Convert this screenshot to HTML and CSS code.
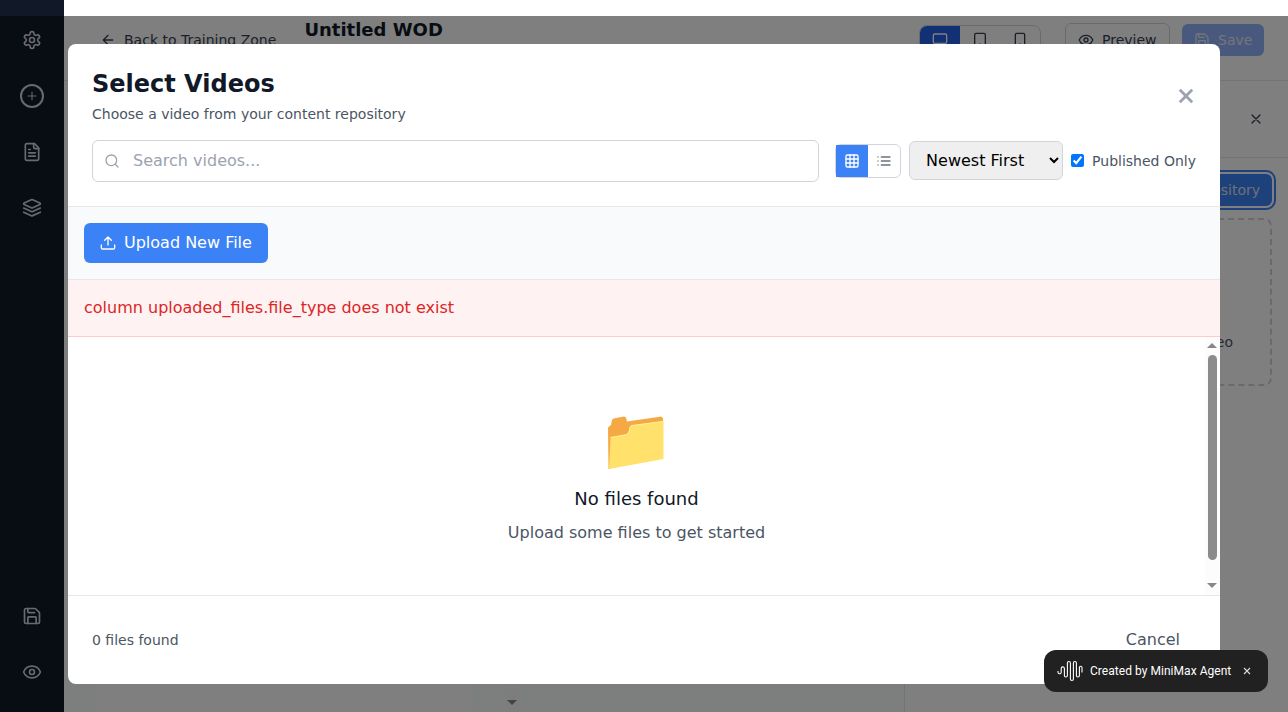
FILE: index.html
```html
<!DOCTYPE html>
<html lang="en">
<head>
<meta charset="utf-8">
<title>Untitled WOD</title>
<link rel="stylesheet" href="styles.css">
</head>
<body>
<svg class="symbols" width="0" height="0">
  <symbol id="save" viewBox="0 0 24 24"><path d="M15.2 3a2 2 0 0 1 1.4.6l3.8 3.8a2 2 0 0 1 .6 1.4V19a2 2 0 0 1-2 2H5a2 2 0 0 1-2-2V5a2 2 0 0 1 2-2z"/><path d="M17 21v-7a1 1 0 0 0-1-1H8a1 1 0 0 0-1 1v7M7 3v4a1 1 0 0 0 1 1h7"/></symbol>
  <symbol id="eye" viewBox="0 0 24 24"><path d="M2.062 12.348a1 1 0 0 1 0-.696 10.75 10.75 0 0 1 19.876 0 1 1 0 0 1 0 .696 10.75 10.75 0 0 1-19.876 0"/><circle cx="12" cy="12" r="3"/></symbol>
  <symbol id="close" viewBox="0 0 24 24"><path d="M18 6 6 18M6 6l12 12"/></symbol>
</svg>
<div class="app">
  <nav class="sidebar">
    <div class="group">
      <svg class="icon i20" viewBox="0 0 24 24"><path d="M12.22 2h-.44a2 2 0 0 0-2 2v.18a2 2 0 0 1-1 1.73l-.43.25a2 2 0 0 1-2 0l-.15-.08a2 2 0 0 0-2.73.73l-.22.38a2 2 0 0 0 .73 2.73l.15.1a2 2 0 0 1 1 1.72v.51a2 2 0 0 1-1 1.74l-.15.09a2 2 0 0 0-.73 2.73l.22.38a2 2 0 0 0 2.73.73l.15-.08a2 2 0 0 1 2 0l.43.25a2 2 0 0 1 1 1.73V20a2 2 0 0 0 2 2h.44a2 2 0 0 0 2-2v-.18a2 2 0 0 1 1-1.73l.43-.25a2 2 0 0 1 2 0l.15.08a2 2 0 0 0 2.73-.73l.22-.39a2 2 0 0 0-.73-2.73l-.15-.08a2 2 0 0 1-1-1.74v-.5a2 2 0 0 1 1-1.74l.15-.09a2 2 0 0 0 .73-2.73l-.22-.38a2 2 0 0 0-2.73-.73l-.15.08a2 2 0 0 1-2 0l-.43-.25a2 2 0 0 1-1-1.73V4a2 2 0 0 0-2-2z"/><circle cx="12" cy="12" r="3"/></svg>
      <span class="add"><svg class="icon" width="12" height="12" viewBox="0 0 24 24"><path d="M4 12h16M12 4v16"/></svg></span>
      <svg class="icon i20" viewBox="0 0 24 24"><path d="M15 2H6a2 2 0 0 0-2 2v16a2 2 0 0 0 2 2h12a2 2 0 0 0 2-2V7Z"/><path d="M14 2v4a2 2 0 0 0 2 2h4M10 9H8M16 13H8M16 17H8"/></svg>
      <svg class="icon i20" viewBox="0 0 24 24"><path d="M12.83 2.18a2 2 0 0 0-1.66 0L2.6 6.08a1 1 0 0 0 0 1.83l8.58 3.91a2 2 0 0 0 1.66 0l8.58-3.9a1 1 0 0 0 0-1.83Z"/><path d="m22 12-9.17 4.16a2 2 0 0 1-1.66 0L2 12M22 17l-9.17 4.16a2 2 0 0 1-1.66 0L2 17"/></svg>
    </div>
    <div class="group">
      <svg class="icon i20"><use href="#save"/></svg>
      <svg class="icon i20"><use href="#eye"/></svg>
    </div>
  </nav>
  <div class="main">
    <header class="topbar">
      <div class="back"><svg class="icon i16" viewBox="0 0 24 24"><path d="m12 19-7-7 7-7M19 12H5"/></svg>Back to Training Zone</div>
      <div class="title">Untitled WOD</div>
      <div class="actions">
        <div class="devices">
          <span class="device active"><svg class="icon i16" viewBox="0 0 24 24"><rect x="2" y="3" width="20" height="14" rx="2"/><path d="M8 21h8M12 17v4"/></svg></span>
          <span class="device"><svg class="icon i16" viewBox="0 0 24 24"><rect x="4" y="2" width="16" height="20" rx="2"/><path d="M12 18h.01"/></svg></span>
          <span class="device"><svg class="icon i16" viewBox="0 0 24 24"><rect x="5" y="2" width="14" height="20" rx="2"/><path d="M12 18h.01"/></svg></span>
        </div>
        <div class="preview"><svg class="icon i16"><use href="#eye"/></svg>Preview</div>
        <div class="save"><svg class="icon i16"><use href="#save"/></svg>Save</div>
      </div>
    </header>
    <div class="workspace">
      <div class="canvas"><div class="sheet"></div><div class="canvas-scroll"><i class="down"></i></div></div>
      <aside class="panel">
        <div class="panel-head"><svg class="icon i16"><use href="#close"/></svg></div>
        <div class="panel-body">
          <div class="repository">Select from Repository</div>
          <div class="drop">Select a Video</div>
        </div>
      </aside>
    </div>
  </div>
</div>

<div class="overlay"></div>
<section class="modal">
  <div class="modal-head">
    <div class="heading">
      <div><h2>Select Videos</h2><p>Choose a video from your content repository</p></div>
      <span class="modal-close"><svg class="icon" width="16" height="16" viewBox="0 0 16 16"><path d="m1.800 1.800 12.400 12.400M14.200 1.800 1.800 14.200"/></svg></span>
    </div>
    <div class="filters">
      <div class="search"><svg class="icon i16" viewBox="0 0 24 24"><circle cx="11" cy="11" r="8"/><path d="m21 21-4.300-4.300"/></svg>Search videos...</div>
      <div class="views">
        <span class="view active"><svg class="icon i16" viewBox="0 0 24 24"><rect x="3" y="3" width="18" height="18" rx="2"/><path d="M3 9h18M3 15h18M9 3v18M15 3v18"/></svg></span>
        <span class="view"><svg class="icon i16" viewBox="0 0 24 24"><path d="M8 6h13M8 12h13M8 18h13M3 6h.01M3 12h.01M3 18h.01"/></svg></span>
      </div>
      <select class="sort"><option>Newest First</option></select>
      <label class="published"><input type="checkbox" checked>Published Only</label>
    </div>
  </div>
  <div class="toolbar">
    <div class="upload"><svg class="icon i16" viewBox="0 0 24 24"><path d="M12 15V3M7 8l5-5 5 5M2 15v4a2 2 0 0 0 2 2h16a2 2 0 0 0 2-2v-4"/></svg>Upload New File</div>
  </div>
  <div class="error">column uploaded_files.file_type does not exist</div>
  <div class="content">
    <div class="empty">
      <svg class="folder" width="58" height="54" viewBox="0 0 58 54">
        <path fill="#f4a945" d="M1 11.500 4 9l1-5 1.500-1.500L17 .5l2 1 1 4L54.500.5l1.500 2V6L3 53H1.500z"/>
        <path fill="#ffe16b" d="M2 53 3.500 21.500 20 18.500l2-2 1-5 2-2L56.500 5v38z"/>
        <path fill="none" stroke="#fff09a" stroke-width="1.200" d="M3.500 21.500 20 18.500l2-2 1-5 2-2L56.500 5.500"/>
      </svg>
      <h3>No files found</h3>
      <p>Upload some files to get started</p>
    </div>
    <div class="scroll"><i class="up"></i><i class="thumb"></i><i class="down"></i></div>
  </div>
  <div class="modal-foot"><span class="count">0 files found</span><span class="cancel">Cancel</span></div>
</section>

<div class="badge">
  <svg class="wave" width="26" height="22" viewBox="0 0 26 22"><path d="M1 11v1.200a1.600 1.600 0 0 0 3.200 0V8.500a1.600 1.600 0 0 1 3.200 0v7a1.500 1.500 0 0 0 3 0V3a1.500 1.500 0 0 1 3 0v16a1.500 1.500 0 0 0 3 0V3a1.500 1.500 0 0 1 3 0v12.500a1.500 1.500 0 0 0 3 0v-8a1.300 1.300 0 0 1 2.600 0v5"/></svg>
  <span>Created by MiniMax Agent</span>
  <svg class="badge-close" width="8" height="8" viewBox="0 0 8 8"><path d="m1 1 6 6M7 1 1 7"/></svg>
</div>
</body>
</html>
```

FILE: styles.css
```css
* { box-sizing: border-box; }
body { margin: 0; height: 712px; overflow: hidden; position: relative; background: #fff; color: #111827; font: 16px/24px "DejaVu Sans", sans-serif; }
h2, h3, p { margin: 0; }
.symbols { position: absolute; }
.icon { fill: none; stroke: currentColor; stroke-width: 2; stroke-linecap: round; stroke-linejoin: round; flex: none; display: block; }
.i16 { width: 16px; height: 16px; }
.i20 { width: 20px; height: 20px; }

.app { display: flex; height: 712px; }
.sidebar { width: 64px; background: #111827; color: #d1d5db; display: flex; flex-direction: column; justify-content: space-between; padding: 30px 0; }
.group { display: flex; flex-direction: column; align-items: center; gap: 36px; }
.add { width: 24px; height: 24px; margin: -2px 0; border: 2px solid; border-radius: 50%; display: grid; place-items: center; }
.main { flex: 1; display: flex; flex-direction: column; min-width: 0; }
.topbar { height: 81px; border-bottom: 1px solid #e5e7eb; display: flex; align-items: center; padding: 0 24px 0 36px; color: #374151; }
.back { display: flex; align-items: center; gap: 8px; font-size: 14px; width: 204.4px; white-space: nowrap; }
.title { font-size: 18px; line-height: 28px; font-weight: bold; color: #111827; margin-bottom: 21px; }
.actions { margin-left: auto; display: flex; align-items: center; gap: 12px; font-size: 14px; }
.devices { display: flex; border: 1px solid #d1d5db; border-radius: 8px; overflow: hidden; margin-right: 12px; height: 30px; width: 122px; }
.device { flex: 1; display: grid; place-items: center; }
.device.active { background: #2563eb; color: #fff; }
.preview, .save { display: flex; align-items: center; gap: 8px; border-radius: 6px; }
.preview { border: 1px solid #d1d5db; width: 105px; height: 34px; padding-left: 12px; }
.save { background: #93b3fa; color: #e5eaf5; width: 82px; height: 32px; padding-left: 12px; }
.workspace { flex: 1; display: flex; }
.canvas { flex: 1; background: #f8fefb; display: flex; padding-left: 32px; }
.sheet { width: 376px; background: #fff; border-radius: 0 0 8px 8px; }
.canvas-scroll { width: 15px; margin-left: 33px; background: #fafafa; display: flex; flex-direction: column; justify-content: flex-end; align-items: flex-start; padding: 0 0 7px 2px; }
.panel { width: 384px; border-left: 1px solid #e5e7eb; background: #fff; }
.panel-head { height: 77px; border-bottom: 1px solid #e5e7eb; display: flex; justify-content: flex-end; align-items: center; padding-right: 24px; color: #374151; }
.panel-body { padding: 16px; font-size: 14px; }
.repository { height: 32px; margin-bottom: 12px; background: #3b82f6; color: #dbe1ec; border-radius: 6px; display: flex; align-items: center; justify-content: flex-end; padding-right: 12px; box-shadow: 0 0 0 2px #fff, 0 0 0 4px #3b82f6; }
.drop { height: 168px; border: 2px dashed #d1d5db; border-radius: 8px; display: flex; align-items: flex-end; justify-content: flex-end; padding: 0 37px 30px 0; color: #4b5563; }

.overlay { position: absolute; inset: 16px 0 0; background: rgba(0, 0, 0, .5); }
.modal { position: absolute; left: 68px; top: 44px; width: 1152px; height: 640px; background: #fff; border-radius: 8px; overflow: hidden; display: flex; flex-direction: column; }
.modal-head { padding: 24px; border-bottom: 1px solid #e5e7eb; }
.heading { display: flex; justify-content: space-between; align-items: center; margin-bottom: 16px; }
.heading h2 { font-size: 24px; line-height: 32px; }
.heading p { font-size: 14px; line-height: 20px; margin-top: 4px; color: #4b5563; }
.modal-close { color: #9ca3af; padding-right: 2px; }
.modal-close .icon { stroke-width: 2.8; stroke-linecap: butt; }
.filters { height: 42px; display: flex; align-items: center; gap: 8px; }
.search { flex: 1; height: 42px; margin-right: 8px; border: 1px solid #d1d5db; border-radius: 6px; display: flex; align-items: center; gap: 13px; padding: 0 11px; color: #9ca3af; }
.views { width: 66px; height: 34px; border: 1px solid #d1d5db; border-radius: 6px; display: flex; color: #6b7280; }
.view { flex: 1; display: grid; place-items: center; }
.view.active { background: #3b82f6; color: #fff; }
.sort { width: 154px; height: 39px; margin-bottom: 2px; padding: 8px 12px; border: 1px solid #d1d5db; border-radius: 6px; background: #efefef; color: #000; font: 16px "DejaVu Sans", sans-serif; }
.published { display: flex; align-items: center; font-size: 14px; color: #4b5563; white-space: nowrap; }
.published input { width: 13px; height: 13px; margin: 0 8px 1px 0; }
.toolbar { background: #f9fafb; padding: 16px; border-bottom: 1px solid #e5e7eb; }
.upload { width: 184px; height: 40px; background: #3b82f6; color: #fff; border-radius: 6px; display: flex; align-items: center; gap: 8px; padding: 0 16px; white-space: nowrap; }
.error { padding: 16px; background: #fef2f2; color: #dc2626; border-bottom: 1px solid #fecaca; }
.content { flex: 1; display: flex; min-height: 0; }
.empty { flex: 1; display: flex; flex-direction: column; align-items: center; padding-top: 79px; }
.folder { display: block; margin-right: 1px; }
.empty h3 { font-size: 18px; line-height: 28px; font-weight: normal; margin: 15px 0 8px; }
.empty p { color: #4b5563; }
.scroll { width: 15px; background: #fcfcfc; display: flex; flex-direction: column; align-items: flex-start; padding: 6px 0 7px 2px; }
.up, .down { width: 0; height: 0; border: 5px solid transparent; }
.up { border-top: 0; border-bottom-color: #878787; }
.down { border-bottom: 0; border-top-color: #878787; }
.thumb { width: 9px; height: 205px; border-radius: 5px; background: #8b8b8b; margin: 7px 0 auto 1px; }
.modal-foot { height: 89px; border-top: 1px solid #e5e7eb; padding: 0 40px 0 24px; display: flex; align-items: center; justify-content: space-between; color: #4b5563; }
.count { font-size: 14px; }
.badge { position: absolute; left: 1044px; top: 650px; width: 224px; height: 42px; border-radius: 12px; background: #212121; color: #fff; display: flex; align-items: center; padding: 0 17px 0 13px; font: 400 12px/18px Roboto, sans-serif; letter-spacing: .04px; white-space: nowrap; }
.wave, .badge-close { fill: none; stroke: #fff; stroke-width: 1.1; flex: none; }
.wave { margin-right: 7px; }
.badge-close { margin-left: auto; stroke: #ddd; }
```
